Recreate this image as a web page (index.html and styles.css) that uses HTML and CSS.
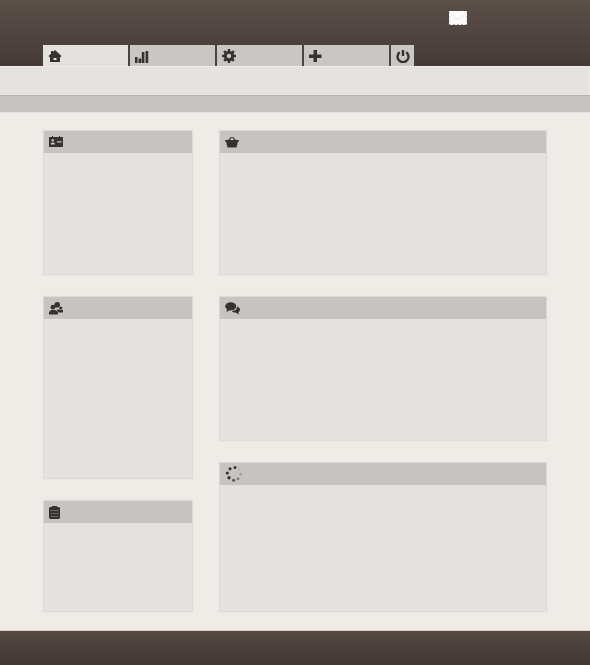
FILE: index.html
```html
<!DOCTYPE html>
<html lang="en">
<head>
<meta charset="utf-8">
<title>Dashboard</title>
<link rel="stylesheet" href="styles.css">
</head>
<body>
<header class="top">
  <div class="mail-row">
    <svg class="mail" width="18" height="14" viewBox="0 0 18 14"><rect width="18" height="14" fill="#fbfafa"/><path d="M0 13.500h18" stroke="#c9a0a4" stroke-width="1" stroke-dasharray="2 2"/><path d="M.5 1v12M17.500 1v12" stroke="#e6d4d6" stroke-width="1" stroke-dasharray="2 2"/><path d="M3 4l6 5 6-5" fill="none" stroke="#e2e3e8" stroke-width="1"/></svg>
  </div>
  <nav class="tabs">
    <a class="tab tab-active"><svg class="ico" width="14" height="14" viewBox="0 0 14 14"><path fill="#363230" fill-rule="evenodd" d="M7 1l6.500 6-.8 1H12v5H2V8h-.7L.5 7 3 4.700V2h2v1zM5.500 9v2h3V9z"/></svg></a>
    <a class="tab"><svg class="ico" width="14" height="14" viewBox="0 0 14 14"><path fill="#363230" d="M0 8h2.500v6H0zM3.500 9.500h2.800V14H3.500zM6.800 3h2.600v11H6.800zM10.600 2h2.600v12h-2.600z"/></svg></a>
    <a class="tab"><svg class="ico" width="14" height="14" viewBox="0 0 14 14"><circle cx="7" cy="7" r="3.700" fill="none" stroke="#363230" stroke-width="3"/><path stroke="#363230" stroke-width="2.400" d="M7 0v14M0 7h14M2 2l10 10M12 2L2 12" stroke-dasharray="2.600 8.800"/></svg></a>
    <a class="tab"><svg class="ico" width="14" height="14" viewBox="0 0 14 14"><path fill="#363230" d="M4.500 1h3.500v4.500h4.500V9H8v4H4.500V9H0V5.500h4.500z"/></svg></a>
    <a class="tab tab-power"><svg class="ico" width="14" height="14" viewBox="0 0 14 14"><path fill="none" stroke="#363230" stroke-width="2.400" d="M3.700 3.200a5.500 5.500 0 1 0 6.600 0"/><path stroke="#363230" stroke-width="2.400" d="M7 1v6"/></svg></a>
  </nav>
</header>
<div class="subbar"></div>
<div class="greybar"></div>
<main class="content">
  <div class="col col-left">
    <section class="panel h-a">
      <div class="panel-head"><svg width="14" height="12" viewBox="0 0 14 12"><path fill="#363230" fill-rule="evenodd" d="M0 1h3V0h1v1h6V0h1v1h3v10H0zM3.700 3a1.300 1.300 0 1 0 .01 0zM1.800 8.500h4V7.300L4.800 6.500H2.800l-1 .8zM8 5.300v1.200h4.500V5.300z"/></svg></div>
    </section>
    <section class="panel h-b">
      <div class="panel-head"><svg width="14" height="13" viewBox="0 0 14 13"><circle cx="8.200" cy="2.800" r="2.800" fill="#363230"/><circle cx="4" cy="5.200" r="2.400" fill="#363230"/><circle cx="11.800" cy="6" r="1.600" fill="#363230"/><path fill="#363230" d="M0 12.500v-2.500L2 8h4.200L9 10v2.500zM8.500 7.500l5.500.5v2.500H9.800L7.500 8.200z"/></svg></div>
    </section>
    <section class="panel h-c">
      <div class="panel-head"><svg width="11" height="13" viewBox="0 0 11 13"><path fill="#363230" d="M1 1h2V0h5v1h2l1 1v10l-1 1H1l-1-1V2z"/><path stroke="#77736f" stroke-width=".8" d="M1.500 4.500h8M1.500 7.500h8M1.500 10.500h8"/></svg></div>
    </section>
  </div>
  <div class="col col-right">
    <section class="panel h-d">
      <div class="panel-head"><svg width="14" height="12" viewBox="0 0 14 12"><path fill="#363230" d="M0 4h3.200L6 .8l1 .5L4.800 4h4.400L7 1.300l1-.5L10.800 4H14v1.500h-1L11.500 11.500h-9L1 5.500H0z"/></svg></div>
    </section>
    <section class="panel h-e">
      <div class="panel-head"><svg width="15" height="13" viewBox="0 0 15 13"><ellipse cx="5.700" cy="4.300" rx="5.500" ry="4" fill="#363230"/><path fill="#363230" d="M2 7l-.5 3L5 8zM12 4.500c2 .8 3 2 3 3.300 0 1.200-.8 2-1.600 2.500l.6 2.200-3-1.800c-2 0-3.500-.7-4.300-1.700 3 0 5.500-1.500 5.300-4.500z"/></svg></div>
    </section>
    <section class="panel h-f">
      <div class="panel-head"><svg width="18" height="18" viewBox="0 0 18 18"><g><circle cx="10" cy="2.500" r="1.500" fill="#3a3634"/><circle cx="5" cy="3.800" r="1.600" fill="#3a3634"/><circle cx="2.300" cy="8" r="1.600" fill="#363230"/><circle cx="4" cy="12.800" r="1.700" fill="#363230"/><circle cx="8.600" cy="15.300" r="1.500" fill="#55514f"/><circle cx="13" cy="13.800" r="1.400" fill="#7a7775"/><circle cx="15.500" cy="9.200" r="1.200" fill="#9b9997"/><circle cx="14" cy="4.700" r="1.100" fill="#b6b4b2"/></g></svg></div>
    </section>
  </div>
</main>
<footer class="bottom"></footer>
</body>
</html>
```
FILE: styles.css
```css
* { box-sizing: border-box; }
html, body { margin: 0; padding: 0; }
body {
  width: 590px;
  height: 665px;
  overflow: hidden;
  background: #efece8;
  display: flex;
  flex-direction: column;
}
.top {
  height: 66px;
  flex: none;
  padding-left: 43px;
  display: flex;
  flex-direction: column;
  justify-content: flex-end;
  background: linear-gradient(#5b4f49, #463a37);
}
.mail-row {
  flex: 1;
  display: flex;
  justify-content: flex-end;
  padding: 11px 123px 0 0;
}
.mail { display: block; }
.tabs { display: flex; height: 21px; }
.tab {
  width: 87px;
  height: 21px;
  background: #c8c7c4;
  border-right: 2px solid #4b4440;
  padding: 4px 0 0 5px;
  display: block;
}
.tab-active { background: #e3e2de; }
.tab-power {
  width: 23px;
  border-right: 0;
  padding-left: 5px;
}
.ico { display: block; }
.subbar {
  height: 29px;
  flex: none;
  margin-right: 1px;
  background: #e4e3df;
  border-top: 1px solid #eeede9;
}
.greybar {
  height: 18px;
  flex: none;
  background: #c5c4c2;
  border-top: 1px solid #b5b3af;
  border-bottom: 1px solid #e3e1dd;
}
.content {
  flex: 1;
  padding: 17px 43px 0;
  display: flex;
  gap: 26px;
  align-items: flex-start;
}
.col { display: flex; flex-direction: column; gap: 21px; }
.col-left { width: 150px; }
.col-right { width: 328px; }
.panel {
  background: #e3e2de;
  border: 1px solid #dddcd7;
  box-shadow: 0 0 0 1px #ebe9e4;
}
.panel-head {
  height: 22px;
  background: #c5c4c2;
  display: flex;
  align-items: center;
  padding-left: 5px;
}
.h-a { height: 145px; }
.h-b { height: 183px; }
.h-c { height: 112px; }
.h-d { height: 145px; }
.h-e { height: 145px; }
.h-f { height: 150px; }
.bottom {
  height: 35px;
  flex: none;
  background: linear-gradient(#554842, #413734);
  border-top: 1px solid #d8cfc8;
}
```
